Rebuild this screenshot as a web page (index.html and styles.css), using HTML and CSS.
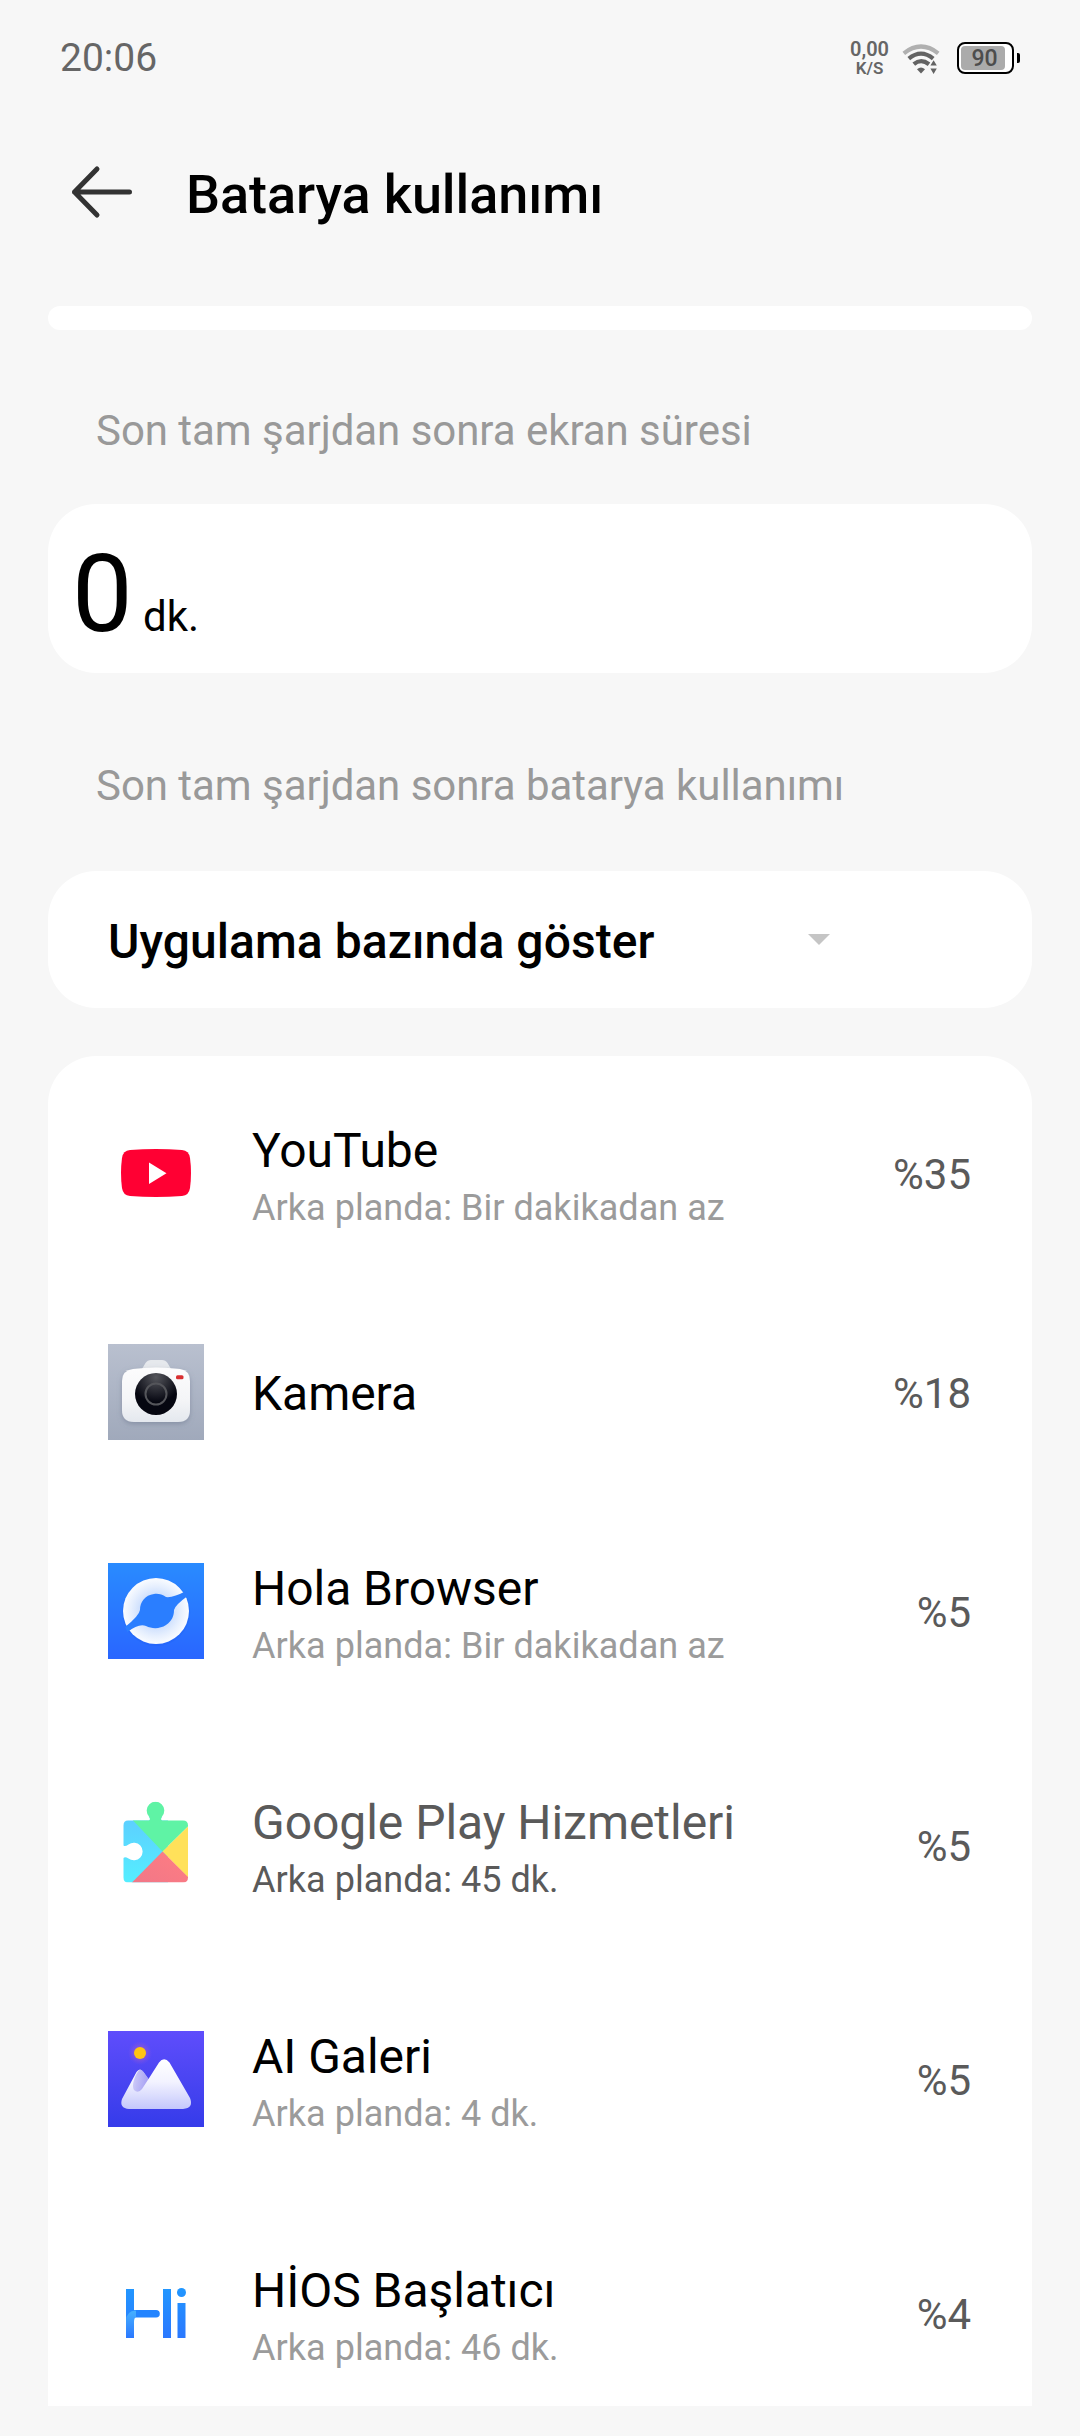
FILE: index.html
```html
<!DOCTYPE html>
<html lang="tr">
<head>
<meta charset="utf-8">
<title>Batarya kullanımı</title>
<link rel="stylesheet" href="styles.css">
</head>
<body>
<div class="screen">
  <div class="status">
    <span class="clock">20:06</span>
    <div class="speed"><span class="speed-value">0,00</span><span class="speed-unit">K/S</span></div>
    <svg class="wifi" width="38" height="32" viewBox="0 0 38 32" fill="none">
      <path d="M1.8 10.3Q19 -3.3 36.2 10.3" stroke="#b0b0b0" stroke-width="4.2"/>
      <path d="M6.8 15.6Q19 5.6 31.2 15.6" stroke="#636363" stroke-width="4.2"/>
      <path d="M11.8 21.2Q19 15.2 27 21.2" stroke="#636363" stroke-width="4.2"/>
      <path d="M15 26.2Q19 22.6 23 26.2L19 30.4Z" fill="#636363"/>
      <path d="M28.4 22.6L31.6 17.2L34.8 22.6ZM28.4 25.6H34.8L31.6 31Z" fill="#636363"/>
    </svg>
    <div class="battery"><span class="battery-level">90</span></div>
    <span class="battery-tip"></span>
  </div>

  <div class="header">
    <svg class="back" width="62" height="54" viewBox="0 0 62 54" fill="none" stroke="#333" stroke-width="5" stroke-linecap="round" stroke-linejoin="round">
      <path d="M58.500 27H3.5M26 4L3.5 27L26 50"/>
    </svg>
    <h1 class="title">Batarya kullanımı</h1>
  </div>

  <div class="strip"></div>
  <p class="label label-screen">Son tam şarjdan sonra ekran süresi</p>
  <div class="card time-card"><span class="time-value">0</span><span class="time-unit">&nbsp;dk.</span></div>
  <p class="label label-usage">Son tam şarjdan sonra batarya kullanımı</p>
  <div class="card select-card">
    <span class="select-text">Uygulama bazında göster</span>
    <svg class="caret" width="22" height="11" viewBox="0 0 22 11"><path d="M0 0H22L11 11Z" fill="#c5c5c5"/></svg>
  </div>

  <div class="list">
    <div class="row">
      <svg class="icon" viewBox="0 0 96 96">
        <path d="M22 25Q48 23 74 25Q81 25.6 82 33Q84 48 82 63Q81 70.4 74 71Q48 73 22 71Q15 70.4 14 63Q12 48 14 33Q15 25.6 22 25Z" fill="#ff0033"/>
        <path d="M41 37.5V59L58.5 48.2Z" fill="#fff"/>
      </svg>
      <div class="info"><span class="name">YouTube</span><span class="detail">Arka planda: Bir dakikadan az</span></div>
      <span class="percent">%35</span>
    </div>

    <div class="row row-single">
      <svg class="icon" viewBox="0 0 96 96">
        <defs>
          <linearGradient id="cam-bg" x1="0" y1="0" x2="0" y2="1"><stop offset="0" stop-color="#b9c0cf"/><stop offset="1" stop-color="#a0a9bb"/></linearGradient>
          <linearGradient id="cam-body" x1="0" y1="0" x2="0" y2="1"><stop offset="0" stop-color="#fcfcfd"/><stop offset=".6" stop-color="#f4f5f7"/><stop offset="1" stop-color="#e4e8ee"/></linearGradient>
          <radialGradient id="cam-lens" cx=".5" cy=".1" r=".6"><stop offset="0" stop-color="#55565c"/><stop offset="1" stop-color="#050610"/></radialGradient>
          <filter id="cam-shadow" x="-20%" y="-20%" width="140%" height="150%"><feDropShadow dx="0" dy="2" stdDeviation="2.5" flood-color="#68738a" flood-opacity=".5"/></filter>
        </defs>
        <rect width="96" height="96" fill="url(#cam-bg)"/>
        <path d="M34 25L37.5 19Q39.5 16 43 16H54Q57.500 16 59.500 19L63 25Z" fill="#e6e9ed"/>
        <path d="M25 25Q48 22 72 25Q82 26.500 82 37V66Q82 78 70 78H26Q14 78 14 66V37Q14 26.500 25 25Z" fill="url(#cam-body)" filter="url(#cam-shadow)"/>
        <circle cx="48" cy="50" r="21" fill="url(#cam-lens)"/>
        <circle cx="48" cy="50" r="10.500" fill="none" stroke="#54555a" stroke-width="2"/>
        <rect x="68" y="31.300" width="7.500" height="4" rx="1.500" fill="#d82f31"/>
      </svg>
      <div class="info"><span class="name">Kamera</span></div>
      <span class="percent">%18</span>
    </div>

    <div class="row">
      <svg class="icon" viewBox="0 0 96 96">
        <defs>
          <linearGradient id="hola-bg" x1="0" y1="0" x2="0" y2="1"><stop offset="0" stop-color="#298bff"/><stop offset="1" stop-color="#2966ff"/></linearGradient>
          <radialGradient id="hola-disc" cx=".5" cy=".5" r=".5"><stop offset=".5" stop-color="#cfe0fd"/><stop offset=".75" stop-color="#e6effe"/><stop offset="1" stop-color="#fafcff"/></radialGradient>
        </defs>
        <rect width="96" height="96" fill="url(#hola-bg)"/>
        <circle cx="48.200" cy="49" r="34" fill="#1553e8" opacity=".18"/>
        <circle cx="48" cy="48" r="33" fill="url(#hola-disc)"/>
        <path d="M78 28Q65 35 58 34C54 31 50 30.600 46 31C37 32 32 39 32 47Q31 53 17 64L19.500 69Q31 60 38 63C44 66 52 66 58 62C64 58 66 53 66 47Q67 42 81 32Z" fill="#2a7eff"/>
      </svg>
      <div class="info"><span class="name">Hola Browser</span><span class="detail">Arka planda: Bir dakikadan az</span></div>
      <span class="percent">%5</span>
    </div>

    <div class="row row-system">
      <svg class="icon" viewBox="0 0 96 96">
        <defs>
          <linearGradient id="gp-blue" x1="0" y1="0" x2="0" y2="1"><stop offset="0" stop-color="#5dceff"/><stop offset="1" stop-color="#54f0ff"/></linearGradient>
          <linearGradient id="gp-red" x1="0" y1="1" x2="1" y2="0"><stop offset="0" stop-color="#f07788"/><stop offset="1" stop-color="#ff7d82"/></linearGradient>
          <clipPath id="gp-shape"><path d="M20 24H41Q43 23 41 20A8.800 8.800 0 1 1 54 20Q52 23 54 24H75Q80 24 80 29V81Q80 86 75 86H20Q15.500 86 15.500 81V61.500Q17 60 20.500 62A8.800 8.800 0 1 0 20.500 48Q17 50.500 15.500 49V29Q15.500 24 20 24Z"/></clipPath>
        </defs>
        <g clip-path="url(#gp-shape)" transform="translate(0 -.5)">
          <rect y="20" width="60" height="70" fill="url(#gp-blue)"/>
          <path d="M25 24L18 0H80V30L54.500 55Z" fill="#5ff3a5"/>
          <path d="M80 30V81L54.500 55Z" fill="#ffe15a"/>
          <path d="M54.500 55L80 80.500V88H22Z" fill="url(#gp-red)"/>
        </g>
      </svg>
      <div class="info"><span class="name">Google Play Hizmetleri</span><span class="detail">Arka planda: 45 dk.</span></div>
      <span class="percent">%5</span>
    </div>

    <div class="row">
      <svg class="icon" viewBox="0 0 96 96">
        <defs>
          <linearGradient id="gal-bg" x1="0" y1="0" x2="0" y2="1"><stop offset="0" stop-color="#5f4dfc"/><stop offset=".5" stop-color="#4a45f2"/><stop offset="1" stop-color="#353bea"/></linearGradient>
          <linearGradient id="gal-hill" x1="0" y1="0" x2="0" y2="1"><stop offset="0" stop-color="#fff"/><stop offset=".45" stop-color="#f3f3ff"/><stop offset="1" stop-color="#c4c7fc"/></linearGradient>
          <linearGradient id="gal-fold" x1="0" y1="0" x2="1" y2="0"><stop offset="0" stop-color="#b8b4f4"/><stop offset="1" stop-color="#7b72ed"/></linearGradient>
          <radialGradient id="gal-glow"><stop offset=".4" stop-color="#a35cc5" stop-opacity=".7"/><stop offset="1" stop-color="#8054e8" stop-opacity="0"/></radialGradient>
        </defs>
        <rect width="96" height="96" fill="url(#gal-bg)"/>
        <circle cx="32" cy="22" r="12" fill="url(#gal-glow)"/>
        <circle cx="32" cy="22" r="6" fill="#ffc512"/>
        <path d="M21 78Q11 77 14 68L28.500 41Q32 36 35.500 41L40.500 48L51 31.500Q56 25 61.500 31.500L82 67Q86 77 75 78Z" fill="url(#gal-hill)"/>
        <path d="M29 42Q32 36 35.500 41L40.500 48L34 58Q30 63 26 59C24 56 25 49 29 42Z" fill="url(#gal-fold)" opacity=".65"/>
      </svg>
      <div class="info"><span class="name">AI Galeri</span><span class="detail">Arka planda: 4 dk.</span></div>
      <span class="percent">%5</span>
    </div>

    <div class="row">
      <svg class="icon" viewBox="0 0 96 96">
        <defs>
          <linearGradient id="hi-bar" x1="0" y1="24" x2="0" y2="73" gradientUnits="userSpaceOnUse"><stop offset="0" stop-color="#2196ff"/><stop offset="1" stop-color="#2b78ff"/></linearGradient>
          <linearGradient id="hi-curve" x1="0" y1="44" x2="0" y2="73" gradientUnits="userSpaceOnUse"><stop offset="0" stop-color="#48b4ff"/><stop offset="1" stop-color="#2b78ff"/></linearGradient>
        </defs>
        <g fill="url(#hi-bar)">
          <rect x="18" y="24" width="8" height="49"/>
          <rect x="55" y="24" width="8" height="49"/>
          <rect x="69.500" y="38" width="8" height="35"/>
          <circle cx="73.500" cy="27.500" r="4.500"/>
          <path d="M26 45H48A3.800 3.800 0 0 1 48 52.600H27Z" fill="#2384ff"/>
        </g>
        <path d="M18 73V56Q18 46 28 45.500V52Q26 53 26 57V73Z" fill="url(#hi-curve)"/>
      </svg>
      <div class="info"><span class="name">HİOS Başlatıcı</span><span class="detail">Arka planda: 46 dk.</span></div>
      <span class="percent">%4</span>
    </div>
  </div>
</div>
</body>
</html>
```
FILE: styles.css
```css
* { box-sizing: border-box; }
body {
  margin: 0;
  background: #f7f7f7;
  color: #000;
  font-family: Roboto, "Noto Sans", sans-serif;
}
.screen {
  width: 1080px;
  height: 2436px;
  padding: 0 48px 30px;
  display: flex;
  flex-direction: column;
  overflow: hidden;
}
.status {
  flex: none;
  height: 115px;
  margin: 0 12px;
  display: flex;
  align-items: center;
  color: #666;
}
.clock { font-size: 39px; line-height: 46px; margin-right: auto; }
.speed {
  display: flex;
  flex-direction: column;
  align-items: center;
  font-weight: 600;
  padding-top: 1px;
}
.speed-value { font-size: 20px; line-height: 20px; }
.speed-unit { font-size: 17px; line-height: 18px; }
.wifi { margin: 2px 17px 0 13px; }
.battery {
  width: 57px;
  height: 32px;
  border: 2px solid #000;
  border-radius: 8px;
  padding: 2px 7px 2px 2px;
  background: #fff;
}
.battery-level {
  display: block;
  height: 24px;
  border-radius: 4px;
  padding-left: 3px;
  background: #ababab;
  color: #4d4d4d;
  font-size: 23px;
  line-height: 25px;
  font-weight: 500;
  text-align: center;
}
.battery-tip { width: 3px; height: 10px; margin: 0 0 0 3px; background: #000; border-radius: 0 2px 2px 0; }
.header {
  flex: none;
  height: 159px;
  margin-bottom: 32px;
  padding-left: 23px;
  display: flex;
  align-items: center;
}
.back { margin: 0 53px 6px 0; }
.title { margin: 0; font-size: 54px; line-height: 64px; font-weight: 500; letter-spacing: -0.08px; }
.strip { flex: none; height: 24px; border-radius: 12px; background: #fff; }
.label {
  flex: none;
  margin: 0;
  padding-left: 48px;
  color: #999;
  font-size: 42px;
  line-height: 50px;
  letter-spacing: -0.04px;
}
.label-screen { height: 174px; padding-top: 76px; }
.label-usage { height: 198px; padding-top: 88px; }
.card { flex: none; border-radius: 48px; background: #fff; display: flex; }
.time-card { height: 169px; padding: 15px 24px 0; align-items: baseline; line-height: 150px; }
.time-value { font-size: 108px; }
.time-unit { font-size: 42px; }
.select-card { height: 137px; padding: 0 202px 0 60px; align-items: center; justify-content: space-between; }
.select-text { font-size: 48px; line-height: 56px; font-weight: 500; padding-top: 4px; letter-spacing: 0.06px; }
.list {
  flex: 1;
  min-height: 0;
  margin-top: 48px;
  border-radius: 48px 48px 0 0;
  background: #fff;
  overflow: hidden;
}
.row { height: 234px; padding: 0 61px 0 60px; display: flex; align-items: center; }
.row-single { height: 204px; }
.icon { flex: none; width: 96px; height: 96px; margin-right: 48px; }
.info { flex: 1; display: flex; flex-direction: column; padding-top: 9px; }
.row-single .info { padding-top: 3px; }
.name { font-size: 48px; line-height: 60px; letter-spacing: -0.04px; }
.detail { font-size: 36px; line-height: 54px; color: #9b9b9b; letter-spacing: 0.04px; }
.row-system .name { color: #5a5a5a; }
.row-system .detail { color: #5a5a5a; }
.percent { font-size: 42px; line-height: 50px; color: #5a5a5a; padding-top: 3px; }
```
